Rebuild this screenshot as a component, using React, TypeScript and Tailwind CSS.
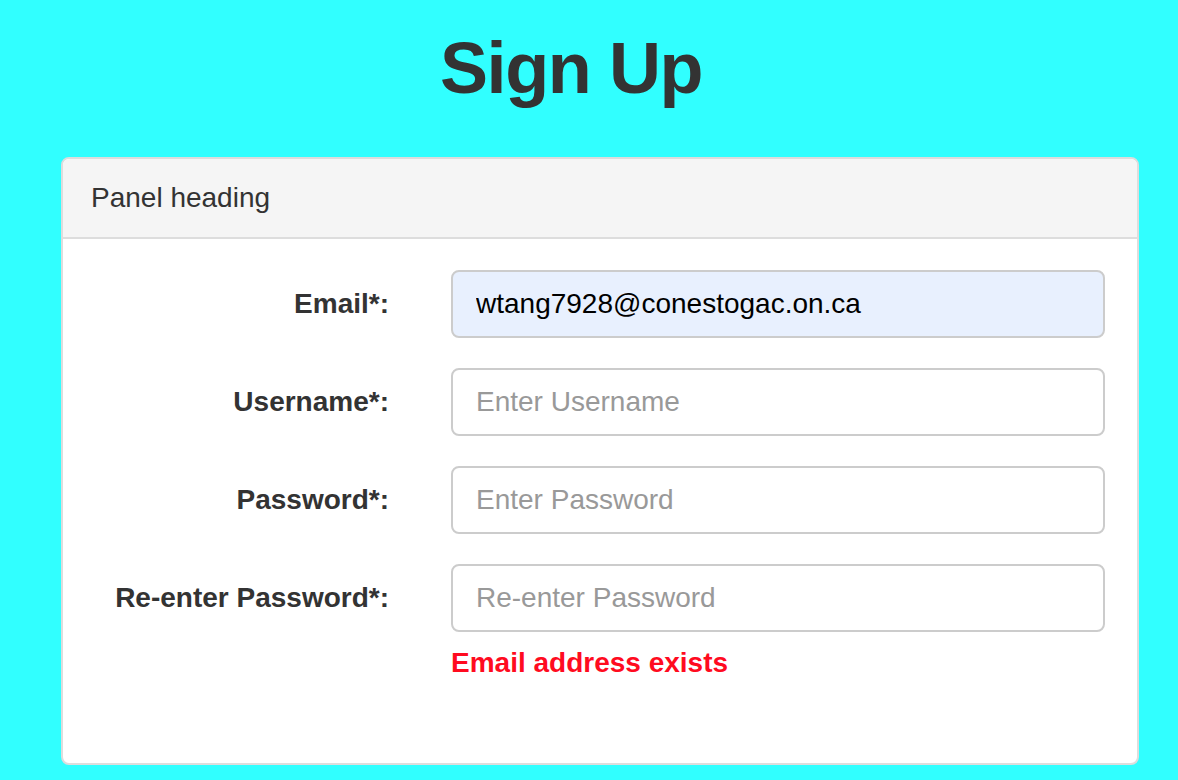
import React from "react";

const font = { fontFamily: '"Liberation Sans", Arial, Helvetica, sans-serif' };

interface FieldProps {
  label: string;
  placeholder: string;
  value?: string;
  type?: string;
}

function Field({ label, placeholder, value, type = "text" }: FieldProps) {
  return (
    <div className="flex items-center gap-[62px]">
      <label className="w-[296px] text-right text-[28px] font-bold text-[#333] leading-[40px]">
        {label}
      </label>
      <input
        type={type}
        defaultValue={value}
        placeholder={placeholder}
        className={
          "flex-1 h-[68px] rounded-[8px] border-2 border-[#ccc] px-[23px] text-[28px] text-black outline-none placeholder:text-[#999] " +
          (value ? "bg-[#e8f0fe]" : "bg-white")
        }
        style={font}
      />
    </div>
  );
}

export default function App() {
  return (
    <div className="min-h-[780px] w-full bg-[#31ffff] pt-[29px] pb-[17px]" style={font}>
      <h1 className="pl-[440px] text-[72px] font-bold leading-[79px] tracking-[-1.4px] text-[#333]">
        Sign Up
      </h1>

      <div className="mx-[61px] mt-[49px] w-[1078px] rounded-[8px] border-2 border-[#ddd] bg-white">
        <div className="rounded-t-[6px] border-b-2 border-[#ddd] bg-[#f5f5f5] px-[28px] py-[19px] text-[28px] leading-[40px] text-[#333]">
          Panel heading
        </div>

        <div className="pl-[30px] pr-[32px] pt-[31px] pb-[80px]">
          <div className="flex flex-col gap-[30px]">
            <Field label="Email*:" placeholder="Enter Email" value="wtang7928@conestogac.on.ca" />
            <Field label="Username*:" placeholder="Enter Username" />
            <Field label="Password*:" placeholder="Enter Password" type="password" />
            <Field label="Re-enter Password*:" placeholder="Re-enter Password" type="password" />
          </div>
          <p className="ml-[358px] mt-[11px] text-[28px] font-bold leading-[40px] text-[#ff0b1f]">
            Email address exists
          </p>
        </div>
      </div>
    </div>
  );
}
